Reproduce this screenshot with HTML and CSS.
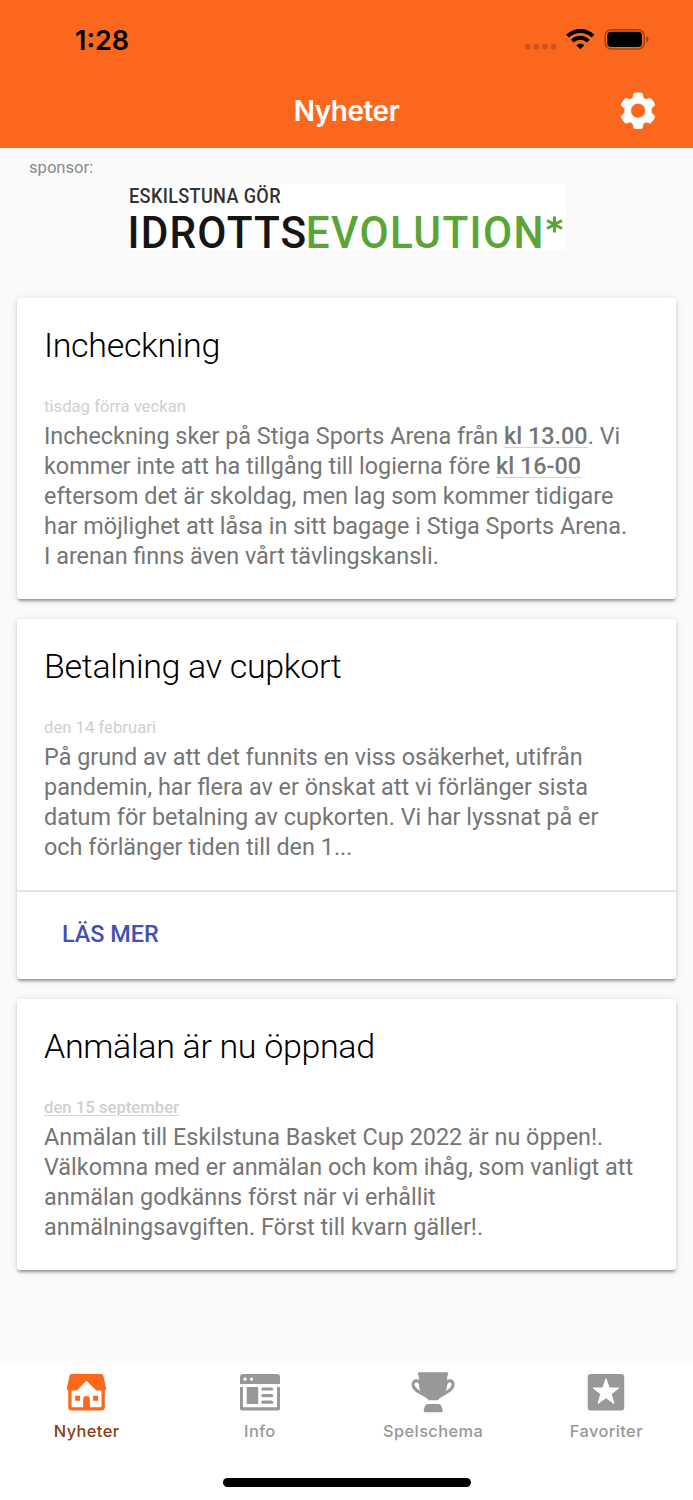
FILE: index.html
```html
<!DOCTYPE html>
<html lang="sv">
<head>
<meta charset="utf-8">
<title>Nyheter</title>
<link rel="stylesheet" href="styles.css">
</head>
<body>
<div class="app">
  <header class="header">
    <div class="status">
      <span class="time">1:28</span>
      <svg class="status-icons" width="125" height="24" viewBox="0 0 125 24">
        <g fill="#c9551b">
          <rect x="1" y="16" width="5.5" height="5.5" rx="1.8"/>
          <rect x="9.6" y="16" width="5.5" height="5.5" rx="1.8"/>
          <rect x="18.2" y="16" width="5.5" height="5.5" rx="1.8"/>
          <rect x="26.9" y="16" width="5.5" height="5.5" rx="1.8"/>
        </g>
        <g fill="none" stroke="#000" stroke-width="4">
          <path d="M43.600 8.200a18 18 0 0 1 25.400 0"/>
          <path d="M48.300 13.100a11.300 11.300 0 0 1 16 0"/>
        </g>
        <path d="M52.300 17.200a5.800 5.800 0 0 1 8 0L56.300 21.300z"/>
        <rect x="81.200" y="1.700" width="39" height="19.400" rx="6" fill="none" stroke="#9b4314" stroke-width="1.500"/>
        <rect x="83.300" y="3.800" width="34.700" height="15.200" rx="3.800"/>
        <path d="M122.200 8.200c3 1 3 5.600 0 6.600z" fill="#9b4314"/>
      </svg>
    </div>
    <div class="titlebar">
      <h1 class="page-title">Nyheter</h1>
      <svg class="gear" width="36" height="38" viewBox="0 0 36 38">
        <path fill="#fff" stroke="#fff" stroke-width=".8" stroke-linejoin="round" fill-rule="evenodd" d="M14 1.300Q18 .4 22.200 1.300L23.200 6L25.900 7.600L30.400 6.300Q33.700 9 34.800 13L31.300 16.700V20.600L34.800 24.400Q33.700 28.500 30.400 31.200L25.900 29.900L23.200 31.500L22.200 36.200Q18 37.100 14 36.200L12.900 31.500L10.200 29.900L5.700 31.200Q2.300 28.500 1.200 24.400L4.800 20.600V16.700L1.200 13Q2.300 9 5.700 6.300L10.200 7.600L12.900 6ZM18.100 11.200a7.500 7.500 0 1 0 0 15a7.500 7.500 0 1 0 0-15Z"/>
      </svg>
    </div>
  </header>

  <section class="sponsor">
    <span class="sponsor-label">sponsor:</span>
    <svg class="sponsor-logo" width="436" height="66" viewBox="0 0 436 66">
      <rect width="436" height="66" fill="#fff"/>
      <text class="logo-small" transform="scale(.93 1)" x="0" y="18.600" textLength="163" lengthAdjust="spacing">ESKILSTUNA GÖR</text>
      <g transform="scale(.94 1)">
        <text class="logo-dark" x="-1.500" y="64" textLength="190" lengthAdjust="spacing">IDROTTS</text>
        <text class="logo-green" x="188" y="64" textLength="253" lengthAdjust="spacing">EVOLUTION</text>
      </g>
      <path class="logo-star" d="M425.500 32.500v16M418 36.500l15 8M433 36.500l-15 8"/>
    </svg>
  </section>

  <main class="feed">
    <article class="card">
      <div class="card-body">
        <h2 class="card-title">Incheckning</h2>
        <p class="card-date">tisdag förra veckan</p>
        <p class="card-text">Incheckning sker på Stiga Sports Arena från <b class="mark">kl 13.00</b>. Vi<br>kommer inte att ha tillgång till logierna före <b class="mark">kl 16-00</b><br>eftersom det är skoldag, men lag som kommer tidigare<br>har möjlighet att låsa in sitt bagage i Stiga Sports Arena.<br>I arenan finns även vårt tävlingskansli.</p>
      </div>
    </article>
    <article class="card">
      <div class="card-body">
        <h2 class="card-title">Betalning av cupkort</h2>
        <p class="card-date">den 14 februari</p>
        <p class="card-text">På grund av att det funnits en viss osäkerhet, utifrån<br>pandemin, har flera av er önskat att vi förlänger sista<br>datum för betalning av cupkorten. Vi har lyssnat på er<br>och förlänger tiden till den 1...</p>
      </div>
      <div class="card-actions"><a class="read-more">LÄS MER</a></div>
    </article>
    <article class="card">
      <div class="card-body">
        <h2 class="card-title">Anmälan är nu öppnad</h2>
        <p class="card-date"><b class="mark">den 15 september</b></p>
        <p class="card-text">Anmälan till Eskilstuna Basket Cup 2022 är nu öppen!.<br>Välkomna med er anmälan och kom ihåg, som vanligt att<br>anmälan godkänns först när vi erhållit<br>anmälningsavgiften. Först till kvarn gäller!.</p>
      </div>
    </article>
  </main>

  <nav class="tabbar">
    <div class="tabs">
      <a class="tab tab-active">
        <svg width="44" height="44" viewBox="0 0 44 44">
          <g transform="translate(-.7 0)">
            <path fill="#fb681c" d="M7 2H37Q38.500 2 39 3.500L41.800 16.500Q42 18.200 40.500 18.500V35Q40.500 38.600 37 38.600H7.500Q4 38.600 4 35V18.500Q2.200 18.200 2.500 16.500L5.300 3.500Q5.600 2 7 2Z"/>
            <path fill="#fff" d="M22.200 8.800L32 18.500H37.200V35.200H25.500V27.200A3.300 3.300 0 0 0 18.900 27.200V35.200H7.300V18.500H12.500Z"/>
            <path fill="#fb681c" d="M10.800 23.700h5v5h-5zM28.800 23.700h5v5h-5z"/>
          </g>
        </svg>
        <span>Nyheter</span>
      </a>
      <a class="tab">
        <svg width="44" height="44" viewBox="0 0 44 44">
          <g fill="#989898">
            <path fill-rule="evenodd" d="M5 2H39Q42 2 42 5V12H2V5Q2 2 5 2ZM7 5.400a1.700 1.700 0 1 0 0 3.400a1.700 1.700 0 1 0 0-3.400ZM13.500 5.400a1.700 1.700 0 1 0 0 3.400a1.700 1.700 0 1 0 0-3.400Z"/>
            <path d="M2 15H5V35.300H39V15H42V36Q42 38.600 39.500 38.600H4.500Q2 38.600 2 36Z"/>
            <path d="M8.700 15H20.200V32H8.700Z"/>
            <rect x="23.300" y="15.400" width="12" height="3.200" rx="1.600"/>
            <rect x="23.300" y="22" width="12" height="3.200" rx="1.600"/>
            <rect x="23.300" y="28.600" width="12" height="3.200" rx="1.600"/>
          </g>
        </svg>
        <span>Info</span>
      </a>
      <a class="tab">
        <svg width="44" height="44" viewBox="0 0 44 44">
          <g fill="#989898">
            <path d="M8 .3H36Q37.600 .3 37.300 2Q37.200 3.200 36.300 3.600L35.700 16Q35 20 30 23L27 28.300H17.500L14.500 23Q9 20 8.400 16L7.800 3.600Q6.800 3.200 6.800 2Q6.600 .3 8 .3Z"/>
            <path d="M17 32H27.500Q30 32 30.700 35L31.700 38.300Q31.900 40.200 30.300 40.200H14Q12.400 40.200 12.600 38.300L13.600 35Q14.300 32 17 32Z"/>
          </g>
          <path fill="none" stroke="#989898" stroke-width="3" d="M10 15.500C9.500 6.500 2 7.500 2 12.500C2 18.500 11 21 18 26M34.300 15.500C34.800 6.500 42.200 7.500 42.200 12.500C42.200 18.500 33 21 26.300 26"/>
        </svg>
        <span>Spelschema</span>
      </a>
      <a class="tab">
        <svg width="44" height="44" viewBox="0 0 44 44">
          <rect x="3.700" y="2" width="36.500" height="36.600" rx="3" fill="#989898"/>
          <path fill="#fff" stroke="#fff" stroke-width="1" stroke-linejoin="round" d="M22 6.700L25.200 16H35L27.200 21.900L30 31.600L22 25.700L14 31.600L16.800 21.900L9 16H18.800Z"/>
        </svg>
        <span>Favoriter</span>
      </a>
    </div>
    <div class="home-indicator"></div>
  </nav>
</div>
</body>
</html>
```

FILE: styles.css
```css
* { box-sizing: border-box; }
body { margin: 0; background: #fafafa; font-family: Roboto, "Liberation Sans", sans-serif; }
h1, h2, p { margin: 0; }
.app { width: 693px; height: 1500px; display: flex; flex-direction: column; background: #fafafa; overflow: hidden; }

.header { height: 148px; background: #fb681d; flex: none; border-bottom: 1px solid #dc753f; }
.status { height: 74px; padding: 27px 44px 0 75px; display: flex; justify-content: space-between; align-items: flex-start; }
.status-icons { margin-top: 1px; }
.time { font: 600 27px/27px Inter, sans-serif; letter-spacing: 0; color: #000; }
.titlebar { height: 73px; padding: 0 37px; display: grid; grid-template-columns: 36px 1fr 36px; align-items: center; }
.page-title { grid-column: 2; text-align: center; font: 600 28px/36px Inter, sans-serif; letter-spacing: -.5px; color: #fff; }
.gear { display: block; }

.sponsor { height: 150px; flex: none; padding-top: 10px; display: flex; flex-direction: column; }
.sponsor-label { padding-left: 29px; font-size: 16.700px; line-height: 20px; height: 26px; color: #8b8b8b; letter-spacing: -.05px; }
.sponsor-logo { display: block; margin-left: 129px; overflow: visible; }
.logo-small { font: 500 19.500px Roboto, sans-serif; fill: #333; }
.logo-dark { font: 500 45px Roboto, sans-serif; fill: #151515; }
.logo-green { font: 500 45px Roboto, sans-serif; fill: #5ba438; }
.logo-star { stroke: #5ba438; stroke-width: 3; fill: none; }

.feed { flex: 1; padding: 0 17px; display: flex; flex-direction: column; gap: 19.500px; }
.card { background: #fff; border-radius: 3px; box-shadow: 0 3px 3px -1px rgba(0,0,0,.36), 0 1px 7px rgba(0,0,0,.13); }
.card-body { padding: 27px 27px 28px; }
.card-title { font-weight: 300; font-size: 34px; line-height: 40px; height: 67px; color: #000; letter-spacing: -.33px; white-space: nowrap; }
.card-date { font-size: 16.700px; line-height: 30px; height: 29px; color: #cfcfcf; }
.card-text { font-size: 23.400px; line-height: 30.100px; color: #757575; white-space: nowrap; }
.mark { font-weight: 500; text-decoration: underline #d4d4d4; text-decoration-thickness: 1px; text-underline-offset: 3px; }
.card-date .mark { text-underline-offset: 2px; }
.card-actions { height: 89px; border-top: 2px solid #e4e4e4; padding: 26px 45px; }
.read-more { font-size: 23.400px; font-weight: 500; line-height: 32px; color: #3f51b5; }

.tabbar { height: 139px; flex: none; background: #fff; }
.tabs { display: grid; grid-template-columns: repeat(4, 1fr); height: 117px; padding-top: 11px; }
.tab { display: flex; flex-direction: column; align-items: center; font: 500 16.400px/20px Inter, sans-serif; letter-spacing: .4px; color: #989898; }
.tab span { margin-top: 5px; }
.tab-active { color: #873d15; }
.home-indicator { width: 248px; height: 9px; border-radius: 5px; background: #000; margin: 0 auto; }
```
